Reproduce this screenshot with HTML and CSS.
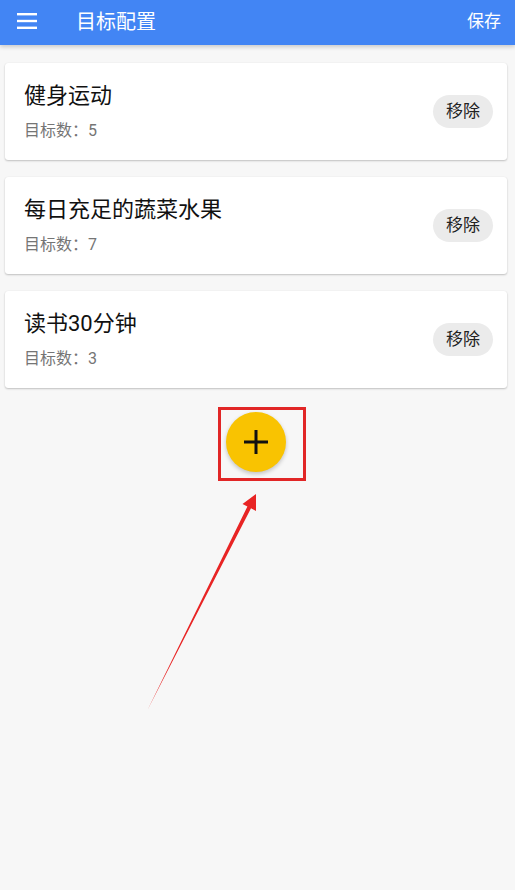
FILE: index.html
```html
<!DOCTYPE html>
<html lang="zh">
<head>
<meta charset="utf-8">
<title>目标配置</title>
<link rel="stylesheet" href="styles.css">
</head>
<body>
<header class="appbar">
  <svg class="menu-icon" width="20" height="16" viewBox="0 0 20 16">
    <rect x="0" y="0" width="20" height="2.4" fill="#fff"/>
    <rect x="0" y="6.8" width="20" height="2.4" fill="#fff"/>
    <rect x="0" y="13.6" width="20" height="2.4" fill="#fff"/>
  </svg>
  <span class="appbar-title">目标配置</span>
  <span class="appbar-action">保存</span>
</header>
<main class="content">
  <div class="card">
    <div class="card-text">
      <div class="card-title">健身运动</div>
      <div class="card-sub">目标数：5</div>
    </div>
    <button class="remove-btn">移除</button>
  </div>
  <div class="card">
    <div class="card-text">
      <div class="card-title">每日充足的蔬菜水果</div>
      <div class="card-sub">目标数：7</div>
    </div>
    <button class="remove-btn">移除</button>
  </div>
  <div class="card">
    <div class="card-text">
      <div class="card-title">读书30分钟</div>
      <div class="card-sub">目标数：3</div>
    </div>
    <button class="remove-btn">移除</button>
  </div>
  <div class="fab-row">
    <button class="fab">
      <svg width="24" height="24" viewBox="0 0 24 24">
        <rect x="10.5" y="0" width="3" height="24" fill="#111"/>
        <rect x="0" y="10.5" width="24" height="3" fill="#111"/>
      </svg>
    </button>
  </div>
</main>
<svg class="annotation" width="515" height="890" viewBox="0 0 515 890">
  <rect x="219.5" y="408.5" width="85" height="71" fill="none" stroke="#e12626" stroke-width="3"/>
  <polygon points="256,494 242.5,504 247.4,506.5 148,709 251,508.3 256,511" fill="#e82424"/>
</svg>
</body>
</html>
```
FILE: styles.css
```css
html, body {
  margin: 0;
  padding: 0;
}
body {
  background: #f7f7f7;
  font-family: Roboto, "Noto Sans CJK SC", "Noto Sans", sans-serif;
  width: 515px;
  height: 890px;
  position: relative;
  overflow: hidden;
}
.appbar {
  height: 45px;
  background: #4285f4;
  display: flex;
  align-items: center;
  padding: 0 14px 0 17px;
  box-shadow: 0 2px 4px rgba(0,0,0,0.18);
  color: #fff;
  position: relative;
}
.menu-icon {
  display: block;
  flex: none;
  margin-top: -3px;
}
.appbar-title {
  margin-left: 39px;
  font-size: 20px;
  flex: 1;
  line-height: 1;
  margin-top: -2px;
}
.appbar-action {
  font-size: 17px;
  line-height: 1;
  margin-top: -2px;
}
.content {
  padding: 18px 8px 0 5px;
  display: flex;
  flex-direction: column;
  gap: 17px;
}
.card {
  background: #fff;
  border-radius: 3px;
  box-shadow: 0 1px 2px rgba(0,0,0,0.22), 0 0 1px rgba(0,0,0,0.08);
  display: flex;
  align-items: center;
  padding: 17px 14px 18px 19px;
  height: 97px;
  box-sizing: border-box;
}
.card-text {
  flex: 1;
}
.card-title {
  font-size: 22px;
  line-height: 29px;
  color: #111;
}
.card-sub {
  margin-top: 10px;
  font-size: 16px;
  line-height: 22px;
  color: #757575;
}
.remove-btn {
  border: none;
  background: #ebebeb;
  border-radius: 17px;
  width: 60px;
  height: 33px;
  font-family: inherit;
  font-size: 17px;
  color: #222;
  padding: 0;
  line-height: 33px;
}
.fab-row {
  display: flex;
  justify-content: center;
  margin-top: 7px;
}
.fab {
  width: 60px;
  height: 60px;
  border-radius: 50%;
  border: none;
  background: #f9c301;
  box-shadow: 0 2px 4px rgba(0,0,0,0.22);
  display: flex;
  align-items: center;
  justify-content: center;
  padding: 0;
}
.fab svg {
  display: block;
}
.annotation {
  position: absolute;
  left: 0;
  top: 0;
  pointer-events: none;
}
```
